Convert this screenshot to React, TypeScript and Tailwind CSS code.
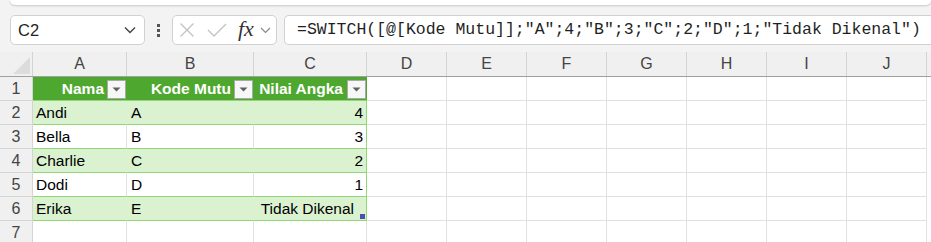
import React from "react";

const cols = [
  { k: "A", w: 94 },
  { k: "B", w: 127 },
  { k: "C", w: 113 },
  { k: "D", w: 80 },
  { k: "E", w: 80 },
  { k: "F", w: 80 },
  { k: "G", w: 80 },
  { k: "H", w: 80 },
  { k: "I", w: 80 },
  { k: "J", w: 80 },
];

const data = [
  ["Andi", "A", "4"],
  ["Bella", "B", "3"],
  ["Charlie", "C", "2"],
  ["Dodi", "D", "1"],
  ["Erika", "E", "Tidak Dikenal"],
];

const FONT = { fontFamily: '"Liberation Sans", Arial, sans-serif' };

function FilterBtn() {
  return (
    <div className="absolute right-[1px] top-[3px] w-[19px] h-[19px] bg-[#f7f7f7] border border-[#a9a9a9] flex items-center justify-center">
      <svg width="9" height="5" viewBox="0 0 9 5">
        <path d="M0.5 0.5 L8.5 0.5 L4.5 4.5 Z" fill="#606060" />
      </svg>
    </div>
  );
}

export default function App() {
  return (
    <div className="w-[931px] h-[242px] bg-[#f3f3f3] overflow-hidden relative" style={FONT}>
      {/* ribbon bottom */}
      <div className="ml-[10px] h-[5px] bg-white rounded-b-[6px] shadow-[0_1px_2px_rgba(0,0,0,0.18)]" />
      {/* formula bar */}
      <div className="flex items-center h-[30px] mt-[10px]">
        <div className="ml-[10px] w-[135px] h-[30px] bg-white border border-[#d1d1d1] rounded-[5px] flex items-center justify-between pl-[7px] pr-[8px]">
          <span className="text-[16.5px] text-[#1f1f1f]">C2</span>
          <svg width="12" height="8" viewBox="0 0 12 8">
            <path d="M1 1.5 L6 6.5 L11 1.5" fill="none" stroke="#444" strokeWidth="1.4" />
          </svg>
        </div>
        <div className="w-[27px] flex flex-col items-center justify-center gap-[2px]">
          <div className="w-[3px] h-[3px] bg-[#555]" />
          <div className="w-[3px] h-[3px] bg-[#555]" />
          <div className="w-[3px] h-[3px] bg-[#555]" />
        </div>
        <div className="w-[105px] h-[30px] bg-white border border-[#d1d1d1] rounded-[5px] flex items-center pl-[6px]">
          <svg width="16" height="16" viewBox="0 0 16 16">
            <path d="M1.5 1.5 L14.5 14.5 M14.5 1.5 L1.5 14.5" stroke="#c2c2c2" strokeWidth="1.3" fill="none" />
          </svg>
          <svg width="20" height="14" viewBox="0 0 20 14" className="ml-[12px]">
            <path d="M1 7 L7 13 L19 1" stroke="#c2c2c2" strokeWidth="1.3" fill="none" />
          </svg>
          <span className="ml-[11px] text-[22px] italic text-[#333] leading-none mb-[2px]" style={{ fontFamily: '"Liberation Serif", serif' }}>fx</span>
          <svg width="11" height="7" viewBox="0 0 11 7" className="ml-[6px]">
            <path d="M1 1 L5.5 5.5 L10 1" fill="none" stroke="#888" strokeWidth="1.2" />
          </svg>
        </div>
        <div className="ml-[7px] flex-1 h-[30px] bg-white border border-[#d1d1d1] border-r-0 rounded-l-[5px] flex items-center pl-[12px]">
          <span className="text-[16.5px] text-[#1f1f1f] whitespace-nowrap" style={{ fontFamily: '"Liberation Mono", monospace' }}>
            =SWITCH([@[Kode Mutu]];"A";4;"B";3;"C";2;"D";1;"Tidak Dikenal")
          </span>
        </div>
      </div>

      {/* grid */}
      <div className="mt-[7px] bg-white">
        {/* column header */}
        <div className="flex h-[25px] bg-[#f0f0f0] border-b border-[#a0a0a0]">
          <div className="w-[33px] border-r border-[#d4d4d4] relative">
            <svg width="19" height="19" viewBox="0 0 19 19" className="absolute right-[1px] bottom-[1px]">
              <path d="M18 1 L18 18 L1 18 Z" fill="#dcdcdc" />
            </svg>
          </div>
          {cols.map((c) => (
            <div
              key={c.k}
              className="border-r border-[#d4d4d4] flex items-center justify-center text-[16px] text-[#444]"
              style={{ width: c.w }}
            >
              {c.k}
            </div>
          ))}
        </div>
        {/* row 1 */}
        <div className="flex h-[24px]">
          <div className="w-[33px] bg-[#f0f0f0] border-r border-b border-[#d4d4d4] flex items-center justify-center text-[16px] text-[#444]">1</div>
          <div className="w-[94px] bg-[#4ea72e] border-b border-[#8ed973] relative text-white font-bold text-[15.5px] flex items-center justify-end pr-[23px]">
            Nama
            <FilterBtn />
          </div>
          <div className="w-[127px] bg-[#4ea72e] border-b border-[#8ed973] relative text-white font-bold text-[15.5px] flex items-center justify-end pr-[23px]">
            Kode Mutu
            <FilterBtn />
          </div>
          <div className="w-[113px] bg-[#4ea72e] border-b border-[#8ed973] relative text-white font-bold text-[15.5px] flex items-center justify-end pr-[24px]">
            Nilai Angka
            <FilterBtn />
          </div>
          {cols.slice(3).map((c) => (
            <div key={c.k} className="border-r border-b border-[#e1e1e1]" style={{ width: c.w }} />
          ))}
        </div>
        {data.map((r, i) => {
          const band = i % 2 === 0;
          const rowCls = band ? "bg-[#daf2d0]" : "bg-white";
          const inner = band ? "border-[#daf2d0]" : "border-[#e1e1e1]";
          return (
            <div key={i} className="flex h-[24px]">
              <div className="w-[33px] bg-[#f0f0f0] border-r border-b border-[#d4d4d4] flex items-center justify-center text-[16px] text-[#444]">
                {i + 2}
              </div>
              <div className={`w-[94px] ${rowCls} border-r ${inner} border-b border-b-[#8ed973] flex items-center pl-[3px] text-[15.5px] text-black`}>
                {r[0]}
              </div>
              <div className={`w-[127px] ${rowCls} border-r ${inner} border-b border-b-[#8ed973] flex items-center pl-[4px] text-[15.5px] text-black`}>
                {r[1]}
              </div>
              <div className={`w-[113px] ${rowCls} border-r border-r-[#8ed973] border-b border-b-[#8ed973] flex items-center justify-end text-[15.5px] text-black relative ${i === 4 ? "pr-[12px]" : "pr-[3px]"}`}>
                {r[2]}
                {i === 4 && <div className="absolute right-[1px] bottom-[1px] w-[5px] h-[5px] bg-[#4a4fb5]" />}
              </div>
              {cols.slice(3).map((c) => (
                <div key={c.k} className="border-r border-b border-[#e1e1e1]" style={{ width: c.w }} />
              ))}
            </div>
          );
        })}
        <div className="flex h-[24px]">
          <div className="w-[33px] bg-[#f0f0f0] border-r border-b border-[#d4d4d4] flex items-center justify-center text-[16px] text-[#444]">7</div>
          {cols.map((c) => (
            <div key={c.k} className="border-r border-b border-[#e1e1e1]" style={{ width: c.w }} />
          ))}
        </div>
      </div>
    </div>
  );
}
